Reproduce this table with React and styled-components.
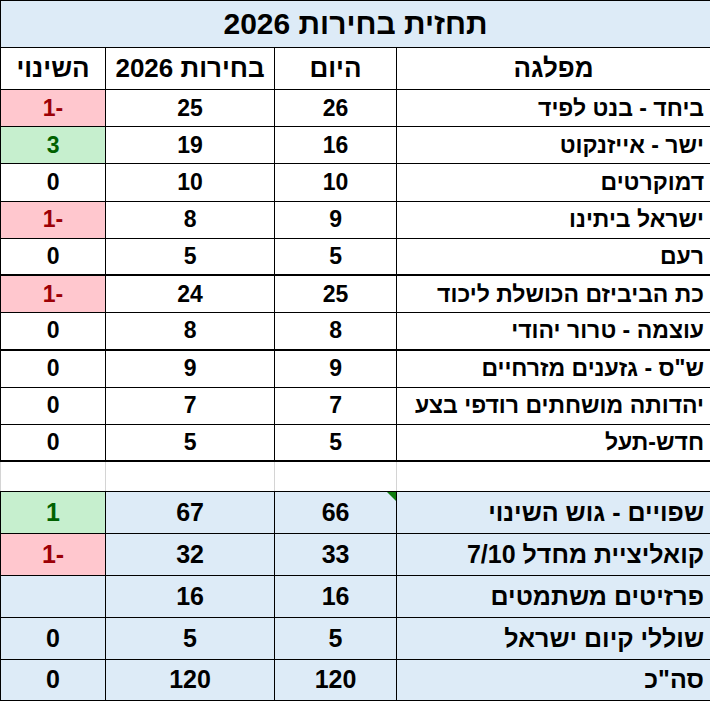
import React from "react";
import styled, { createGlobalStyle } from "styled-components";

const Global = createGlobalStyle`
  html, body {
    margin: 0;
    padding: 0;
    background: #fff;
  }
`;

const Sheet = styled.table`
  direction: rtl;
  width: 710px;
  table-layout: fixed;
  border-collapse: collapse;
  font-family: "Liberation Sans", "DejaVu Sans", sans-serif;
  font-weight: bold;
  color: #000;

  col.party { width: 314px; }
  col.today { width: 122px; }
  col.next { width: 169px; }
  col.change { width: 105px; }
`;

const TitleCell = styled.th`
  height: 46px;
  padding: 0;
  background: #ddebf7;
  border: 1px solid #000;
  font-size: 30px;
  text-align: center;
  vertical-align: middle;
`;

const HeadCell = styled.th`
  height: 41px;
  padding: 0;
  border: 1px solid #000;
  font-size: 26px;
  font-weight: bold;
  text-align: center;
  vertical-align: middle;
`;

const Row = styled.tr`
  height: ${(p) => (p.$tall ? "41.8px" : "37.2px")};
  font-size: ${(p) => (p.$tall ? "25px" : "23px")};
`;

const Cell = styled.td`
  position: relative;
  padding: 0;
  border: 1px solid #000;
  border-bottom: ${(p) => (p.$thick ? "2px" : "1px")} solid #000;
  text-align: ${(p) => (p.$name ? "right" : "center")};
  padding-right: ${(p) => (p.$name ? "6px" : "0")};
  vertical-align: middle;
  white-space: nowrap;
  background: ${(p) =>
    p.$tone === "bad"
      ? "#ffc7ce"
      : p.$tone === "good"
      ? "#c6efce"
      : p.$blue
      ? "#ddebf7"
      : "#fff"};
  color: ${(p) =>
    p.$tone === "bad" ? "#9c0006" : p.$tone === "good" ? "#006100" : "#000"};
`;

const GapCell = styled.td`
  height: 29px;
  padding: 0;
  border-top: 2px solid #000;
  border-bottom: 1px solid #000;
  border-left: 1px solid #d4d4d4;
  border-right: 1px solid #d4d4d4;
`;

const ErrorFlag = styled.span`
  position: absolute;
  top: 0;
  right: 0;
  width: 0;
  height: 0;
  border-top: 9px solid #107c10;
  border-left: 9px solid transparent;
`;

const parties = [
  { name: "ביחד - בנט לפיד", today: 26, next: 25, change: "-1", tone: "bad" },
  { name: "ישר - אייזנקוט", today: 16, next: 19, change: "3", tone: "good" },
  { name: "דמוקרטים", today: 10, next: 10, change: "0" },
  { name: "ישראל ביתינו", today: 9, next: 8, change: "-1", tone: "bad" },
  { name: "רעם", today: 5, next: 5, change: "0", thick: true },
  { name: "כת הביביזם הכושלת ליכוד", today: 25, next: 24, change: "-1", tone: "bad" },
  { name: "עוצמה - טרור יהודי", today: 8, next: 8, change: "0", thick: true },
  { name: 'ש"ס - גזענים מזרחיים', today: 9, next: 9, change: "0" },
  { name: "יהדותה מושחתים רודפי בצע", today: 7, next: 7, change: "0" },
  { name: "חדש-תעל", today: 5, next: 5, change: "0", thick: true },
];

const blocs = [
  { name: "שפויים - גוש השינוי", today: 66, next: 67, change: "1", tone: "good", flag: true },
  { name: "קואליציית מחדל 7/10", today: 33, next: 32, change: "-1", tone: "bad" },
  { name: "פרזיטים משתמטים", today: 16, next: 16, change: "" },
  { name: "שוללי קיום ישראל", today: 5, next: 5, change: "0" },
  { name: 'סה"כ', today: 120, next: 120, change: "0" },
];

export default function App() {
  return (
    <>
      <Global />
      <Sheet>
        <colgroup>
          <col className="party" />
          <col className="today" />
          <col className="next" />
          <col className="change" />
        </colgroup>
        <thead>
          <tr>
            <TitleCell colSpan={4}>תחזית בחירות 2026</TitleCell>
          </tr>
          <tr>
            <HeadCell>מפלגה</HeadCell>
            <HeadCell>היום</HeadCell>
            <HeadCell>בחירות 2026</HeadCell>
            <HeadCell>השינוי</HeadCell>
          </tr>
        </thead>
        <tbody>
          {parties.map((r) => (
            <Row key={r.name}>
              <Cell $name $thick={r.thick}>{r.name}</Cell>
              <Cell $thick={r.thick}>{r.today}</Cell>
              <Cell $thick={r.thick}>{r.next}</Cell>
              <Cell $thick={r.thick} $tone={r.tone}>{r.change}</Cell>
            </Row>
          ))}
          <tr>
            <GapCell />
            <GapCell />
            <GapCell />
            <GapCell />
          </tr>
          {blocs.map((r) => (
            <Row key={r.name} $tall>
              <Cell $name $blue>{r.name}</Cell>
              <Cell $blue>
                {r.flag && <ErrorFlag />}
                {r.today}
              </Cell>
              <Cell $blue>{r.next}</Cell>
              <Cell $blue $tone={r.tone}>{r.change}</Cell>
            </Row>
          ))}
        </tbody>
      </Sheet>
    </>
  );
}
